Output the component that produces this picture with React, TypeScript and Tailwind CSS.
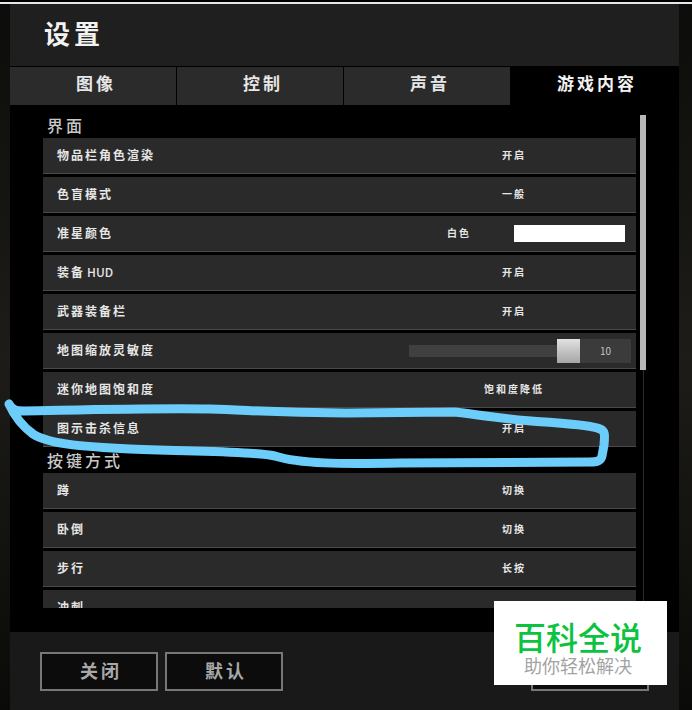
const font = { fontFamily: '"Noto Sans CJK SC", "Noto Sans", sans-serif' }

const tabs = ['图像', '控制', '声音', '游戏内容']

type Row = { label: string; suffix?: string; value?: string; kind?: 'color' | 'slider' }

const interfaceRows: Row[] = [
  { label: '物品栏角色渲染', value: '开启' },
  { label: '色盲模式', value: '一般' },
  { label: '准星颜色', value: '白色', kind: 'color' },
  { label: '装备', suffix: 'HUD', value: '开启' },
  { label: '武器装备栏', value: '开启' },
  { label: '地图缩放灵敏度', value: '10', kind: 'slider' },
  { label: '迷你地图饱和度', value: '饱和度降低' },
  { label: '图示击杀信息', value: '开启' },
]

const keyRows: Row[] = [
  { label: '蹲', value: '切换' },
  { label: '卧倒', value: '切换' },
  { label: '步行', value: '长按' },
  { label: '冲刺' },
]

function SettingRow({ row }: { row: Row }) {
  return (
    <div className="grid h-[36px] shrink-0 grid-cols-[1fr_244px] items-center border-b border-[#4a4a4a] bg-[#2a2a2a]">
      <span className="pb-[2px] pl-[14px] text-[12px] font-bold tracking-[2px] text-[#e6e6e6]">
        {row.label}
        {row.suffix && <span className="ml-[2px] font-medium tracking-normal">{row.suffix}</span>}
      </span>
      {row.kind === 'color' && (
        <div className="flex items-center justify-end pr-[11px]">
          <span className="mr-[25px] w-[60px] pb-[2px] text-center text-[10px] font-bold tracking-[2px] text-[#e6e6e6]">{row.value}</span>
          <div className="h-[17px] w-[111px] bg-white" />
        </div>
      )}
      {row.kind === 'slider' && (
        <div className="flex h-[24px] items-center justify-end pr-[5px]">
          <div className="h-[12px] w-[148px] bg-[#404040]" />
          <div className="h-[24px] w-[23px] bg-gradient-to-b from-[#e2e2e2] to-[#a6a6a6]" />
          <div className="flex h-[24px] w-[51px] items-center justify-center bg-[#3b3b3b] text-[10px] text-[#c4c4c4]">{row.value}</div>
        </div>
      )}
      {!row.kind && (
        <span className="pb-[2px] text-center text-[10px] font-bold tracking-[2px] text-[#e6e6e6]">{row.value}</span>
      )}
    </div>
  )
}

function Section({ title, rows }: { title: string; rows: Row[] }) {
  return (
    <div className="flex shrink-0 flex-col">
      <h2 className="h-[26px] pt-[3px] pl-[4px] text-[16px] leading-[21px] font-medium tracking-[3px] text-[#c9c9c9]">{title}</h2>
      <div className="flex flex-col gap-[3px]">
        {rows.map((r) => (
          <SettingRow key={r.label} row={r} />
        ))}
      </div>
    </div>
  )
}

export default function App() {
  return (
    <div style={font} className="relative h-[710px] w-[692px] overflow-hidden bg-gradient-to-b from-[#0c0c0a] via-[#1d1c18] to-[#0a0a08]">
      <div className="h-[2px] bg-black" />
      <div className="h-[2px] bg-[#e8e8e8]" />
      <div className="ml-[10px] flex h-[706px] w-[669px] flex-col">
        {/* header */}
        <div className="flex h-[62px] shrink-0 items-center bg-[#1f1f1f] pb-[6px] pl-[34px]">
          <h1 className="text-[26px] font-bold tracking-[4px] text-[#f2f2f2]">设置</h1>
        </div>

        {/* tabs */}
        <div className="flex h-[39px] shrink-0 gap-[1px] bg-black pt-[1px]">
          {tabs.map((t, i) => (
            <div
              key={t}
              className={
                i === 3
                  ? 'flex h-[38px] w-[168px] items-center justify-center bg-black pb-[6px] pl-[4px] text-[17px] font-bold tracking-[3px] text-[#f2f2f2]'
                  : 'flex h-[38px] w-[166px] items-center justify-center bg-[#2b2b2b] pb-[6px] pl-[6px] text-[17px] font-bold tracking-[3px] text-[#e6e6e6]'
              }
            >
              {t}
            </div>
          ))}
        </div>

        {/* list */}
        <div className="relative flex-1 bg-black pt-[7px]">
          <div className="ml-[33px] flex h-[496px] w-[593px] flex-col overflow-hidden">
            <Section title="界面" rows={interfaceRows} />
            <Section title="按键方式" rows={keyRows} />
          </div>

          {/* scrollbar */}
          <div className="absolute top-[10px] left-[633px] h-[493px] w-px bg-[#2a2a2a]" />
          <div className="absolute top-[10px] left-[630px] h-[255px] w-[6px] bg-[#b8b8b8]" />
        </div>

        {/* footer */}
        <div className="flex h-[78px] shrink-0 gap-[7px] bg-[#191919] pt-[20px] pl-[30px]">
          <button className="h-[39px] w-[118px] border-2 border-[#777] bg-[#0c0c0c] pb-[2px] pl-[4px] text-[18px] font-bold tracking-[3px] text-[#a8a8a8]">关闭</button>
          <button className="h-[39px] w-[118px] border-2 border-[#777] bg-[#0c0c0c] pb-[2px] pl-[4px] text-[18px] font-bold tracking-[3px] text-[#a8a8a8]">默认</button>
          <button className="ml-[241px] h-[39px] w-[118px] border-2 border-[#777] bg-[#0c0c0c]" />
        </div>
      </div>

      {/* hand-drawn highlight */}
      <svg className="absolute top-0 left-0" width="692" height="710" fill="none">
        <path
          d="M9 404 C12 410 16 411 24 411 C80 410 150 408 210 409 C250 410 270 413 346 413 L455 412 C480 415 510 420 545 422 C570 424 590 425 600 429 C605 431 605 434 604 445 L602 456 C601 461 597 462 590 462 L400 463 C340 464 300 464 275 456 C250 451 200 452 130 449 C90 447 50 445 33 434 C22 426 14 415 9 404 Z"
          stroke="#6ccdfb"
          strokeWidth="9"
          strokeLinejoin="round"
        />
      </svg>

      {/* watermark */}
      <div className="absolute top-[601px] left-[494px] flex h-[84px] w-[173px] flex-col items-center bg-white pt-[17px] pr-[5px]">
        <div className="text-[32px] leading-[36px] font-medium text-[#0cc33f]">百科全说</div>
        <div className="text-[18px] leading-[22px] text-[#a3a3a3]">助你轻松解决</div>
      </div>
    </div>
  )
}
